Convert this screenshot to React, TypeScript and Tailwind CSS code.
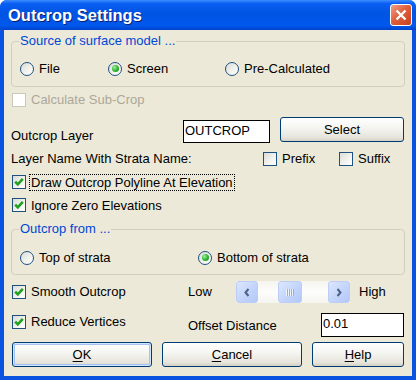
import React from 'react'

function Check({ checked = false, disabled = false }: { checked?: boolean; disabled?: boolean }) {
  return (
    <span
      className={
        disabled
          ? 'w-[14px] h-[14px] shrink-0 border border-[#CAC8BB] bg-white'
          : 'w-[14px] h-[14px] shrink-0 border border-[#1C5180] bg-[linear-gradient(135deg,#DCDCD7,#F3F3EF_60%,#FFFFFF)] flex items-center justify-center'
      }
    >
      {checked && (
        <svg width="12" height="12" viewBox="0 0 12 12">
          <polyline points="2.2,5.6 4.8,8.4 9.8,2.8" stroke="#21A121" strokeWidth="2.6" fill="none" />
        </svg>
      )}
    </span>
  )
}

function Radio({ checked = false }: { checked?: boolean }) {
  return (
    <span className="w-[14px] h-[14px] shrink-0 rounded-full border border-[#1C5180] bg-[linear-gradient(135deg,#DCDCD7,#F3F3EF_60%,#FFFFFF)] flex items-center justify-center">
      {checked && (
        <span className="w-[7px] h-[7px] rounded-full bg-[radial-gradient(circle_at_35%_35%,#9CF09C,#2DB22D_55%,#1A8A1A)]" />
      )}
    </span>
  )
}

function XpButton({ children, def = false, className = '' }: { children: React.ReactNode; def?: boolean; className?: string }) {
  return (
    <button
      className={
        (def
          ? 'shadow-[inset_0_0_0_1px_#CEE7FF,inset_0_0_0_2px_#A7C1F3] '
          : '') +
        'h-[25px] border border-[#003C74] rounded-[3px] bg-[linear-gradient(180deg,#FFFFFF,#F4F4F0_45%,#E6E4DB_85%,#D6D0C5)] text-black flex items-center justify-center ' +
        className
      }
    >
      {children}
    </button>
  )
}

function ScrollBtn({ dir }: { dir: 'l' | 'r' }) {
  return (
    <div className="w-[22px] h-[22px] rounded-[3px] border border-[#BCCEF7] bg-[linear-gradient(135deg,#DCE6FE,#C1D3FB_60%,#B3C8F8)] flex items-center justify-center">
      <svg width="8" height="9" viewBox="0 0 8 9">
        <polyline
          points={dir === 'l' ? '5.5,1 2.5,4.5 5.5,8' : '2.5,1 5.5,4.5 2.5,8'}
          stroke="#4D6185"
          strokeWidth="2"
          fill="none"
        />
      </svg>
    </div>
  )
}

export default function App() {
  return (
    <div className="w-[416px] h-[380px] bg-white font-['Liberation_Sans',Arial,sans-serif] text-[13px] text-black">
      <div className="w-[416px] h-[380px] rounded-t-[7px] bg-[#0A52E0] flex flex-col overflow-hidden">
        {/* Title bar */}
        <div className="h-[30px] shrink-0 flex items-center pl-[8px] pr-[4px] bg-[linear-gradient(180deg,#3D8DFF_0%,#0A5EF2_12%,#0054E3_45%,#0058EC_85%,#0043CC_100%)]">
          <span className="text-white font-bold text-[16.5px] [text-shadow:1px_1px_0_#0A1E6E]">Outcrop Settings</span>
          <div className="ml-auto w-[22px] h-[22px] rounded-[3px] border border-white bg-[linear-gradient(135deg,#F0A088,#E0603C_45%,#C8401E)] flex items-center justify-center">
            <svg width="12" height="12" viewBox="0 0 12 12">
              <path d="M1.5 1.5 L10.5 10.5 M10.5 1.5 L1.5 10.5" stroke="white" strokeWidth="2.4" />
            </svg>
          </div>
        </div>

        {/* Client area */}
        <div className="mx-[4px] h-[346px] bg-[#ECE9D8] flex flex-col px-[7px] pt-[4px]">
          {/* Source group */}
          <fieldset className="h-[53px] border border-[#D0D0BF] rounded-[4px] px-[8px]">
            <legend className="ml-[-1px] px-[1px] leading-[14px] text-[#0046D5]">Source of surface model ...</legend>
            <div className="flex items-center h-[15px] mt-[13px]">
              <div className="w-[88px] flex items-center gap-[5px]">
                <Radio />
                <span>File</span>
              </div>
              <div className="w-[117px] flex items-center gap-[5px]">
                <Radio checked />
                <span>Screen</span>
              </div>
              <div className="flex items-center gap-[5px]">
                <Radio />
                <span>Pre-Calculated</span>
              </div>
            </div>
          </fieldset>

          {/* Calculate Sub-Crop */}
          <div className="mt-[5px] h-[16px] flex items-center gap-[5px] ml-[1px]">
            <Check disabled />
            <span className="text-[#ACA899]">Calculate Sub-Crop</span>
          </div>

          {/* Outcrop Layer */}
          <div className="mt-[9px] h-[26px] flex items-start">
            <span className="w-[172px] pt-[9px]">Outcrop Layer</span>
            <div className="mt-[3px] w-[87px] h-[23px] border border-black bg-white flex items-center pl-[1px] pb-[2px]">
              OUTCROP
            </div>
            <XpButton className="ml-[10px] w-[124px]">Select</XpButton>
          </div>

          {/* Layer name */}
          <div className="mt-[8px] h-[16px] flex items-center">
            <span className="w-[252px]">Layer Name With Strata Name:</span>
            <div className="w-[76px] flex items-center gap-[5px]">
              <Check />
              <span>Prefix</span>
            </div>
            <div className="flex items-center gap-[5px]">
              <Check />
              <span>Suffix</span>
            </div>
          </div>

          {/* Draw polyline */}
          <div className="mt-[6px] h-[18px] flex items-center gap-[3px] ml-[1px]">
            <Check checked />
            <span className="border border-dotted border-black px-[1px] leading-[15px]">Draw Outcrop Polyline At Elevation</span>
          </div>

          {/* Ignore zero */}
          <div className="mt-[5px] h-[18px] flex items-center gap-[3px] ml-[1px]">
            <Check checked />
            <span className="border border-transparent px-[1px] leading-[15px]">Ignore Zero Elevations</span>
          </div>

          {/* Outcrop from group */}
          <fieldset className="mt-[8px] h-[53px] border border-[#D0D0BF] rounded-[4px] px-[8px]">
            <legend className="ml-[-1px] px-[1px] leading-[14px] text-[#0046D5]">Outcrop from ...</legend>
            <div className="flex items-center h-[15px] mt-[14px]">
              <div className="w-[178px] flex items-center gap-[5px]">
                <Radio />
                <span>Top of strata</span>
              </div>
              <div className="flex items-center gap-[5px]">
                <Radio checked />
                <span>Bottom of strata</span>
              </div>
            </div>
          </fieldset>

          {/* Smooth outcrop */}
          <div className="mt-[6px] h-[22px] flex items-center">
            <div className="w-[177px] flex items-center gap-[4px] pl-[1px]">
              <Check checked />
              <span className="px-[1px]">Smooth Outcrop</span>
            </div>
            <span className="w-[48px]">Low</span>
            <div className="w-[114px] h-[22px] flex bg-[linear-gradient(180deg,#F5F4EF,#FDFDFB_50%,#F5F4EF)]">
              <ScrollBtn dir="l" />
              <div className="ml-[20px] w-[24px] h-[22px] rounded-[3px] border border-[#BCCEF7] bg-[linear-gradient(135deg,#DCE6FE,#C1D3FB_60%,#B3C8F8)] flex items-center justify-center">
                <svg width="8" height="7" viewBox="0 0 8 7">
                  <path d="M0.5 0 V7 M2.5 0 V7 M4.5 0 V7 M6.5 0 V7" stroke="#EEF4FE" strokeWidth="1" />
                  <path d="M1.5 0 V7 M3.5 0 V7 M5.5 0 V7 M7.5 0 V7" stroke="#8CAEF4" strokeWidth="1" />
                </svg>
              </div>
              <div className="ml-auto">
                <ScrollBtn dir="r" />
              </div>
            </div>
            <span className="ml-[9px]">High</span>
          </div>

          {/* Reduce vertices */}
          <div className="mt-[10px] h-[24px] flex items-start">
            <div className="w-[177px] h-[17px] flex items-center gap-[4px] pl-[1px]">
              <Check checked />
              <span className="px-[1px]">Reduce Vertices</span>
            </div>
            <span className="w-[133px] self-end pb-[2px]">Offset Distance</span>
            <div className="w-[83px] h-[24px] border border-black bg-white flex items-center pl-[1px] pb-[3px]">0.01</div>
          </div>

          {/* Buttons */}
          <div className="mt-[5px] flex gap-[10px] pl-[1px]">
            <XpButton def className="w-[140px]">
              <span className="underline underline-offset-2">O</span>K
            </XpButton>
            <XpButton className="w-[140px]">
              <span className="underline underline-offset-2">C</span>ancel
            </XpButton>
            <XpButton className="w-[92px]">
              <span className="underline underline-offset-2">H</span>elp
            </XpButton>
          </div>
        </div>
      </div>
    </div>
  )
}
